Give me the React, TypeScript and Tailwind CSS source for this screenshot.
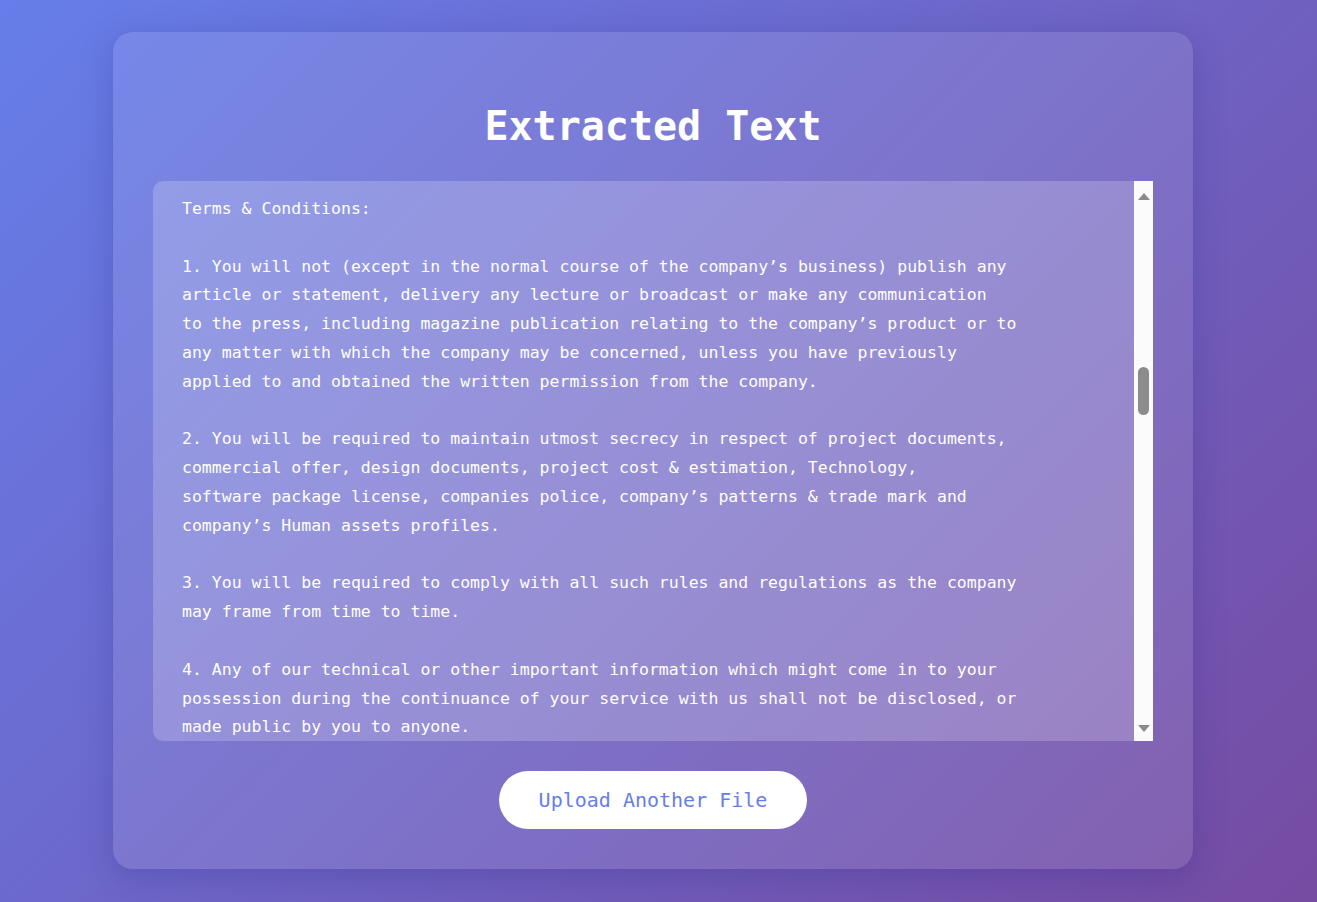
import React from 'react';

const extractedText = `Terms & Conditions:

1. You will not (except in the normal course of the company’s business) publish any
article or statement, delivery any lecture or broadcast or make any communication
to the press, including magazine publication relating to the company’s product or to
any matter with which the company may be concerned, unless you have previously
applied to and obtained the written permission from the company.

2. You will be required to maintain utmost secrecy in respect of project documents,
commercial offer, design documents, project cost & estimation, Technology,
software package license, companies police, company’s patterns & trade mark and
company’s Human assets profiles.

3. You will be required to comply with all such rules and regulations as the company
may frame from time to time.

4. Any of our technical or other important information which might come in to your
possession during the continuance of your service with us shall not be disclosed, or
made public by you to anyone.
`;

const mono = "font-['DejaVu_Sans_Mono','Liberation_Mono',monospace]";

const ScrollBar = () => (
    <div className="w-[19px] shrink-0 bg-[#fbfbfb] flex flex-col items-center pt-[12px] pb-[9px]">
        <svg width="12" height="7" viewBox="0 0 12 7">
            <polygon points="6,0 12,7 0,7" fill="#8a8a8a" />
        </svg>
        <div className="mt-[167px] w-[11px] h-[48px] rounded-full bg-[#8c8c8c]" />
        <div className="flex-1" />
        <svg width="12" height="7" viewBox="0 0 12 7">
            <polygon points="0,0 12,0 6,7" fill="#8a8a8a" />
        </svg>
    </div>
);

export default function App() {
    return (
        <div className="min-h-screen w-full bg-[linear-gradient(135deg,#667eea_0%,#764ba2_100%)] flex justify-center pt-[32px] pb-[33px] pr-[11px]">
            <div className="w-[1080px] rounded-[20px] bg-white/10 shadow-[0_8px_32px_rgba(31,38,135,0.25)] px-[40px] pt-[70px] pb-[40px] flex flex-col items-center">
                <h1 className={`${mono} text-[40px] leading-[48px] font-bold text-white mb-[31px]`}>
                    Extracted Text
                </h1>

                <div className="w-full h-[560px] flex rounded-l-[10px] overflow-hidden">
                    <div className="flex-1 bg-white/20 pl-[29px] pt-[14px] overflow-hidden">
                        <pre className={`${mono} text-[16.5px] leading-[28.8px] text-white whitespace-pre-wrap`}>
                            {extractedText}
                        </pre>
                    </div>
                    <ScrollBar />
                </div>

                <button
                    type="button"
                    className={`${mono} mt-[30px] h-[58px] px-[40px] rounded-full bg-white text-[#667eea] text-[20px] hover:bg-gray-50`}
                >
                    Upload Another File
                </button>
            </div>
        </div>
    );
}
